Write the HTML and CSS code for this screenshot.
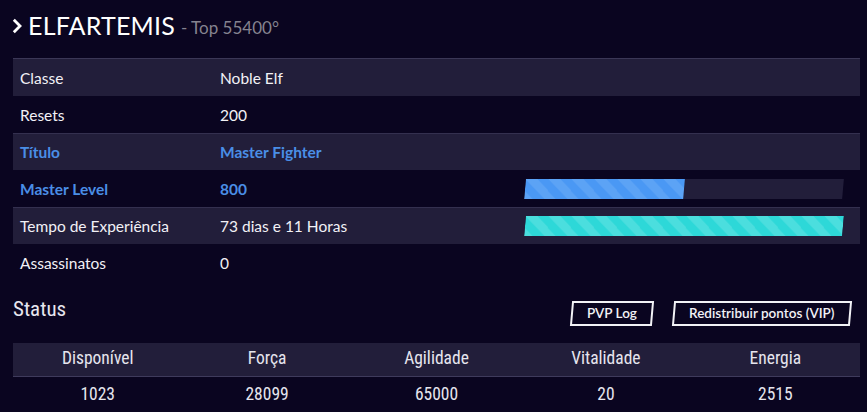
FILE: index.html
```html
<!DOCTYPE html>
<html lang="pt-BR">
<head>
<meta charset="utf-8">
<link rel="stylesheet" href="styles.css">
</head>
<body>
<div class="page">
  <h1 class="title">
    <svg class="chev" width="10" height="16" viewBox="0 0 10 16"><path d="M1.8 1.8 L8 8 L1.8 14.2" fill="none" stroke="#fff" stroke-width="2.8" stroke-linejoin="miter"/></svg>
    <span class="name">ELFARTEMIS</span>
    <span class="rank">- Top 55400°</span>
  </h1>

  <div class="info">
    <div class="row odd first"><span class="k">Classe</span><span class="v">Noble Elf</span><span class="x"></span></div>
    <div class="row"><span class="k">Resets</span><span class="v">200</span><span class="x"></span></div>
    <div class="row odd blue"><span class="k">Título</span><span class="v">Master Fighter</span><span class="x"></span></div>
    <div class="row blue"><span class="k">Master Level</span><span class="v">800</span>
      <span class="x"><span class="bar"><span class="fill fill-blue" style="width:50%"></span></span></span></div>
    <div class="row odd"><span class="k">Tempo de Experiência</span><span class="v">73 dias e 11 Horas</span>
      <span class="x"><span class="bar"><span class="fill fill-cyan" style="width:100%"></span></span></span></div>
    <div class="row"><span class="k">Assassinatos</span><span class="v">0</span><span class="x"></span></div>
  </div>

  <div class="status-head">
    <h2 class="status-title">Status</h2>
    <div class="btns">
      <a class="btn"><span class="btn-label">PVP Log</span></a>
      <a class="btn"><span class="btn-label">Redistribuir pontos (VIP)</span></a>
    </div>
  </div>

  <div class="stats">
    <div class="stats-row head">
      <span>Disponível</span><span>Força</span><span>Agilidade</span><span>Vitalidade</span><span>Energia</span>
    </div>
    <div class="stats-row">
      <span>1023</span><span>28099</span><span>65000</span><span>20</span><span>2515</span>
    </div>
  </div>
</div>
</body>
</html>
```
FILE: styles.css
```css
* { box-sizing: border-box; }
html, body { margin: 0; padding: 0; }
body {
  background: #0a0520;
  color: #ecebf2;
  font-family: Lato, "Open Sans", sans-serif;
  width: 867px;
  height: 412px;
  overflow: hidden;
}
.page {
  padding: 0 7px 0 13px;
}
.title {
  margin: 0;
  height: 58px;
  display: flex;
  align-items: center;
  font-weight: 400;
  padding-bottom: 8px;
}
.chev { margin-left: -1px; margin-right: 6px; margin-top: 1px; }
.name {
  font-size: 25px;
  color: #ffffff;
  letter-spacing: 0.2px;
}
.rank {
  font-size: 17px;
  color: #85838f;
  margin-left: 6px;
  margin-top: 5px;
}

.info { border-top: 1px solid #3b3756; }
.row {
  display: grid;
  grid-template-columns: 207px 305px 1fr;
  align-items: center;
  height: 37px;
  font-size: 15.5px;
  color: #f2f1f6;
}
.row.odd { background: #221e3a; }
.row.odd:not(.first) { border-top: 1px solid #34304f; }
.row .k { padding-left: 7px; }
.row.blue { color: #4a8ee6; font-weight: 700; }
.x { display: flex; align-items: center; padding-right: 17px; }
.bar {
  display: block;
  width: 100%;
  height: 20px;
  background: #221e3a;
  transform: skewX(-5deg);
  overflow: hidden;
}
.fill {
  display: block;
  height: 100%;
  background-size: 23px 23px;
}
.fill-blue {
  background-color: #4a98f4;
  background-image: linear-gradient(45deg, rgba(255,255,255,.1) 25%, transparent 25%, transparent 50%, rgba(255,255,255,.1) 50%, rgba(255,255,255,.1) 75%, transparent 75%, transparent);
}
.fill-cyan {
  background-color: #2dd8d8;
  background-image: linear-gradient(45deg, rgba(255,255,255,.14) 25%, transparent 25%, transparent 50%, rgba(255,255,255,.14) 50%, rgba(255,255,255,.14) 75%, transparent 75%, transparent);
}

.status-head {
  display: flex;
  align-items: center;
  justify-content: space-between;
  height: 62px;
  padding-top: 2px;
}
.status-title {
  margin: 0 0 9px 0;
  font-family: "Liberation Sans Narrow", "Roboto Condensed", "DejaVu Sans Condensed", sans-serif;
  font-weight: 400;
  font-size: 21px;
  color: #e8e7ef;
}
.btns { display: flex; gap: 20px; padding-right: 10px; }
.btn {
  display: inline-block;
  height: 25px;
  line-height: 21px;
  padding: 0 14px;
  border: 2px solid #f2f2f6;
  transform: skewX(-5deg);
  font-size: 13.5px;
  font-weight: 600;
  color: #f2f2f6;
}
.btn-label { display: inline-block; transform: skewX(5deg); }

.stats {
  font-family: "Liberation Sans Narrow", "Roboto Condensed", "DejaVu Sans Condensed", sans-serif;
  font-size: 17.5px;
  color: #e6e5ee;
}
.stats-row {
  display: grid;
  grid-template-columns: repeat(5, 1fr);
  height: 34px;
  align-items: center;
  text-align: center;
}
.stats-row.head {
  background: #221e3a;
  border-bottom: 1px solid #3f3b5c;
  padding-bottom: 3px;
}
```
